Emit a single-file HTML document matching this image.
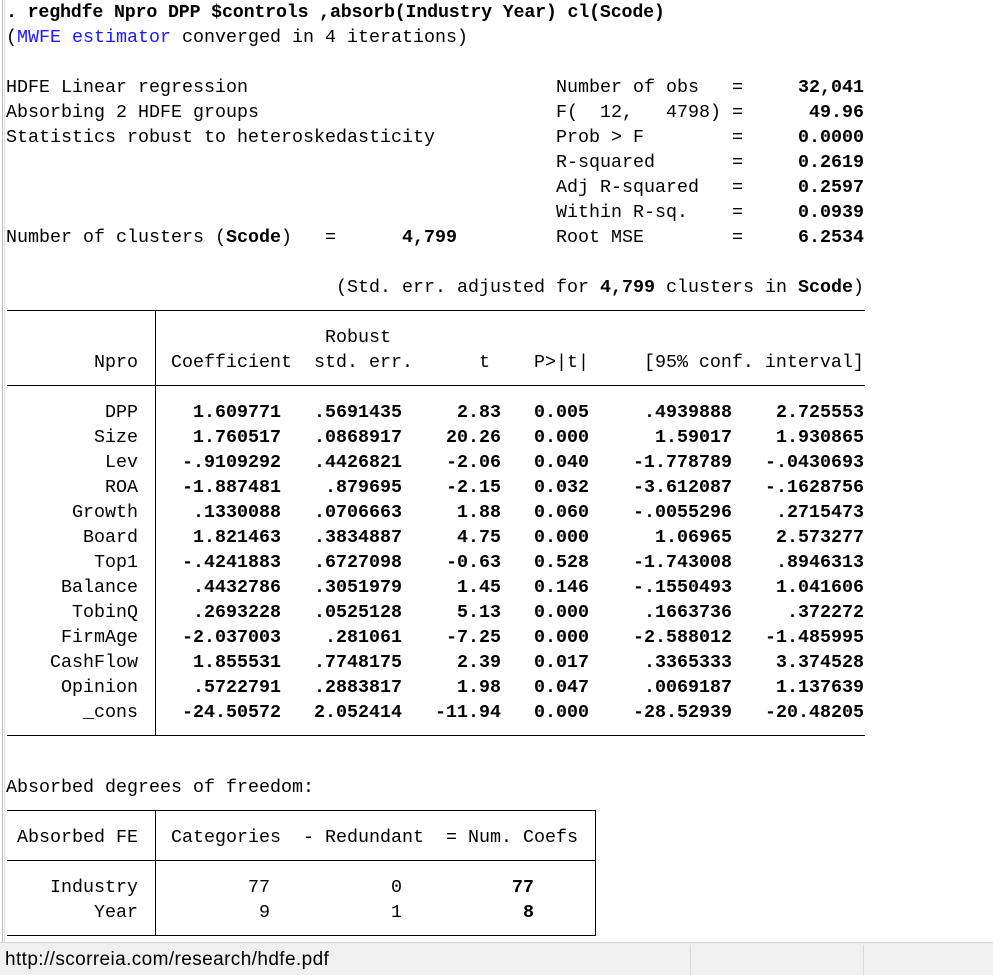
<!DOCTYPE html>
<html><head><meta charset="utf-8"><style>
html,body{margin:0;padding:0;background:#fff;width:993px;height:975px;overflow:hidden;position:relative}
body{font-family:"Liberation Mono",monospace;font-size:18.33px;color:#000}
.l{position:absolute;left:6px;height:25px;line-height:25px;white-space:pre}
.c{position:absolute;height:25px;line-height:25px;white-space:pre;text-align:right}
.h{position:absolute;background:#000;height:1px}
.v{position:absolute;background:#000;width:1px}
b{font-weight:bold}
.blue{color:#1a1aff}
</style></head><body>
<div style="position:absolute;left:2px;top:0;width:1px;height:943px;background:#bdbdbd"></div>
<div style="position:absolute;left:4px;top:0;width:1px;height:943px;background:#e0e0e0"></div>

<div class="l" style="top:0;letter-spacing:-0.2px"><b>. reghdfe Npro DPP $controls ,absorb(Industry Year) cl(Scode)</b></div>
<div class="l" style="top:25px">(<span class="blue">MWFE estimator</span> converged in 4 iterations)</div>

<div class="l" style="top:75px">HDFE Linear regression</div>
<div class="l" style="top:100px">Absorbing 2 HDFE groups</div>
<div class="l" style="top:125px">Statistics robust to heteroskedasticity</div>
<div class="l" style="top:225px">Number of clusters (<b>Scode</b>)   =      <b>4,799</b></div>

<div class="l" style="top:75px;left:556px">Number of obs</div>
<div class="l" style="top:100px;left:556px">F(  12,   4798)</div>
<div class="l" style="top:125px;left:556px">Prob &gt; F</div>
<div class="l" style="top:150px;left:556px">R-squared</div>
<div class="l" style="top:175px;left:556px">Adj R-squared</div>
<div class="l" style="top:200px;left:556px">Within R-sq.</div>
<div class="l" style="top:225px;left:556px">Root MSE</div>
<div class="l" style="top:75px;left:732px">=</div>
<div class="l" style="top:100px;left:732px">=</div>
<div class="l" style="top:125px;left:732px">=</div>
<div class="l" style="top:150px;left:732px">=</div>
<div class="l" style="top:175px;left:732px">=</div>
<div class="l" style="top:200px;left:732px">=</div>
<div class="l" style="top:225px;left:732px">=</div>
<div class="c" style="top:75px;right:129px"><b>32,041</b></div>
<div class="c" style="top:100px;right:129px"><b>49.96</b></div>
<div class="c" style="top:125px;right:129px"><b>0.0000</b></div>
<div class="c" style="top:150px;right:129px"><b>0.2619</b></div>
<div class="c" style="top:175px;right:129px"><b>0.2597</b></div>
<div class="c" style="top:200px;right:129px"><b>0.0939</b></div>
<div class="c" style="top:225px;right:129px"><b>6.2534</b></div>

<div class="l" style="top:275px;left:336px">(Std. err. adjusted for <b>4,799</b> clusters in <b>Scode</b>)</div>

<div class="h" style="top:310px;left:7px;width:858px"></div>
<div class="h" style="top:385px;left:7px;width:858px"></div>
<div class="h" style="top:735px;left:7px;width:858px"></div>
<div class="v" style="left:155px;top:310px;height:425px"></div>

<div class="l" style="top:325px;left:325px">Robust</div>
<div class="l" style="top:350px;left:94px">Npro</div>
<div class="l" style="top:350px;left:171px">Coefficient  std. err.      t    P&gt;|t|     [95% conf. interval]</div>

<div style="position:absolute;left:0;top:400px;width:993px">
<div class="c" style="top:0;right:855px">DPP</div><div class="c" style="top:0;right:712px"><b>1.609771</b></div><div class="c" style="top:0;right:591px"><b>.5691435</b></div><div class="c" style="top:0;right:492px"><b>2.83</b></div><div class="c" style="top:0;right:404px"><b>0.005</b></div><div class="c" style="top:0;right:261px"><b>.4939888</b></div><div class="c" style="top:0;right:129px"><b>2.725553</b></div>
<div class="c" style="top:25px;right:855px">Size</div><div class="c" style="top:25px;right:712px"><b>1.760517</b></div><div class="c" style="top:25px;right:591px"><b>.0868917</b></div><div class="c" style="top:25px;right:492px"><b>20.26</b></div><div class="c" style="top:25px;right:404px"><b>0.000</b></div><div class="c" style="top:25px;right:261px"><b>1.59017</b></div><div class="c" style="top:25px;right:129px"><b>1.930865</b></div>
<div class="c" style="top:50px;right:855px">Lev</div><div class="c" style="top:50px;right:712px"><b>-.9109292</b></div><div class="c" style="top:50px;right:591px"><b>.4426821</b></div><div class="c" style="top:50px;right:492px"><b>-2.06</b></div><div class="c" style="top:50px;right:404px"><b>0.040</b></div><div class="c" style="top:50px;right:261px"><b>-1.778789</b></div><div class="c" style="top:50px;right:129px"><b>-.0430693</b></div>
<div class="c" style="top:75px;right:855px">ROA</div><div class="c" style="top:75px;right:712px"><b>-1.887481</b></div><div class="c" style="top:75px;right:591px"><b>.879695</b></div><div class="c" style="top:75px;right:492px"><b>-2.15</b></div><div class="c" style="top:75px;right:404px"><b>0.032</b></div><div class="c" style="top:75px;right:261px"><b>-3.612087</b></div><div class="c" style="top:75px;right:129px"><b>-.1628756</b></div>
<div class="c" style="top:100px;right:855px">Growth</div><div class="c" style="top:100px;right:712px"><b>.1330088</b></div><div class="c" style="top:100px;right:591px"><b>.0706663</b></div><div class="c" style="top:100px;right:492px"><b>1.88</b></div><div class="c" style="top:100px;right:404px"><b>0.060</b></div><div class="c" style="top:100px;right:261px"><b>-.0055296</b></div><div class="c" style="top:100px;right:129px"><b>.2715473</b></div>
<div class="c" style="top:125px;right:855px">Board</div><div class="c" style="top:125px;right:712px"><b>1.821463</b></div><div class="c" style="top:125px;right:591px"><b>.3834887</b></div><div class="c" style="top:125px;right:492px"><b>4.75</b></div><div class="c" style="top:125px;right:404px"><b>0.000</b></div><div class="c" style="top:125px;right:261px"><b>1.06965</b></div><div class="c" style="top:125px;right:129px"><b>2.573277</b></div>
<div class="c" style="top:150px;right:855px">Top1</div><div class="c" style="top:150px;right:712px"><b>-.4241883</b></div><div class="c" style="top:150px;right:591px"><b>.6727098</b></div><div class="c" style="top:150px;right:492px"><b>-0.63</b></div><div class="c" style="top:150px;right:404px"><b>0.528</b></div><div class="c" style="top:150px;right:261px"><b>-1.743008</b></div><div class="c" style="top:150px;right:129px"><b>.8946313</b></div>
<div class="c" style="top:175px;right:855px">Balance</div><div class="c" style="top:175px;right:712px"><b>.4432786</b></div><div class="c" style="top:175px;right:591px"><b>.3051979</b></div><div class="c" style="top:175px;right:492px"><b>1.45</b></div><div class="c" style="top:175px;right:404px"><b>0.146</b></div><div class="c" style="top:175px;right:261px"><b>-.1550493</b></div><div class="c" style="top:175px;right:129px"><b>1.041606</b></div>
<div class="c" style="top:200px;right:855px">TobinQ</div><div class="c" style="top:200px;right:712px"><b>.2693228</b></div><div class="c" style="top:200px;right:591px"><b>.0525128</b></div><div class="c" style="top:200px;right:492px"><b>5.13</b></div><div class="c" style="top:200px;right:404px"><b>0.000</b></div><div class="c" style="top:200px;right:261px"><b>.1663736</b></div><div class="c" style="top:200px;right:129px"><b>.372272</b></div>
<div class="c" style="top:225px;right:855px">FirmAge</div><div class="c" style="top:225px;right:712px"><b>-2.037003</b></div><div class="c" style="top:225px;right:591px"><b>.281061</b></div><div class="c" style="top:225px;right:492px"><b>-7.25</b></div><div class="c" style="top:225px;right:404px"><b>0.000</b></div><div class="c" style="top:225px;right:261px"><b>-2.588012</b></div><div class="c" style="top:225px;right:129px"><b>-1.485995</b></div>
<div class="c" style="top:250px;right:855px">CashFlow</div><div class="c" style="top:250px;right:712px"><b>1.855531</b></div><div class="c" style="top:250px;right:591px"><b>.7748175</b></div><div class="c" style="top:250px;right:492px"><b>2.39</b></div><div class="c" style="top:250px;right:404px"><b>0.017</b></div><div class="c" style="top:250px;right:261px"><b>.3365333</b></div><div class="c" style="top:250px;right:129px"><b>3.374528</b></div>
<div class="c" style="top:275px;right:855px">Opinion</div><div class="c" style="top:275px;right:712px"><b>.5722791</b></div><div class="c" style="top:275px;right:591px"><b>.2883817</b></div><div class="c" style="top:275px;right:492px"><b>1.98</b></div><div class="c" style="top:275px;right:404px"><b>0.047</b></div><div class="c" style="top:275px;right:261px"><b>.0069187</b></div><div class="c" style="top:275px;right:129px"><b>1.137639</b></div>
<div class="c" style="top:300px;right:855px">_cons</div><div class="c" style="top:300px;right:712px"><b>-24.50572</b></div><div class="c" style="top:300px;right:591px"><b>2.052414</b></div><div class="c" style="top:300px;right:492px"><b>-11.94</b></div><div class="c" style="top:300px;right:404px"><b>0.000</b></div><div class="c" style="top:300px;right:261px"><b>-28.52939</b></div><div class="c" style="top:300px;right:129px"><b>-20.48205</b></div>
</div>

<div class="l" style="top:775px">Absorbed degrees of freedom:</div>
<div class="h" style="top:810px;left:7px;width:589px"></div>
<div class="h" style="top:860px;left:7px;width:589px"></div>
<div class="h" style="top:935px;left:7px;width:589px"></div>
<div class="v" style="left:155px;top:810px;height:125px"></div>
<div class="v" style="left:595px;top:810px;height:126px"></div>
<div class="l" style="top:825px;left:17px">Absorbed FE</div>
<div class="l" style="top:825px;left:171px">Categories  - Redundant  = Num. Coefs</div>
<div class="c" style="top:875px;right:855px">Industry</div>
<div class="c" style="top:875px;right:723px">77</div>
<div class="c" style="top:875px;right:591px">0</div>
<div class="c" style="top:875px;right:459px"><b>77</b></div>
<div class="c" style="top:900px;right:855px">Year</div>
<div class="c" style="top:900px;right:723px">9</div>
<div class="c" style="top:900px;right:591px">1</div>
<div class="c" style="top:900px;right:459px"><b>8</b></div>

<div style="position:absolute;left:0;top:942px;width:993px;height:33px;background:#f0f0f0;border-top:1px solid #d4d4d4"></div>
<div style="position:absolute;left:690px;top:945px;width:1px;height:30px;background:#d9d9d9"></div>
<div style="position:absolute;left:863px;top:945px;width:1px;height:30px;background:#d9d9d9"></div>
<div style="position:absolute;left:5px;top:946px;height:28px;line-height:28px;font-family:'Liberation Sans',sans-serif;font-size:19px;color:#000;letter-spacing:0.4px">http://scorreia.com/research/hdfe.pdf</div>
</body></html>
